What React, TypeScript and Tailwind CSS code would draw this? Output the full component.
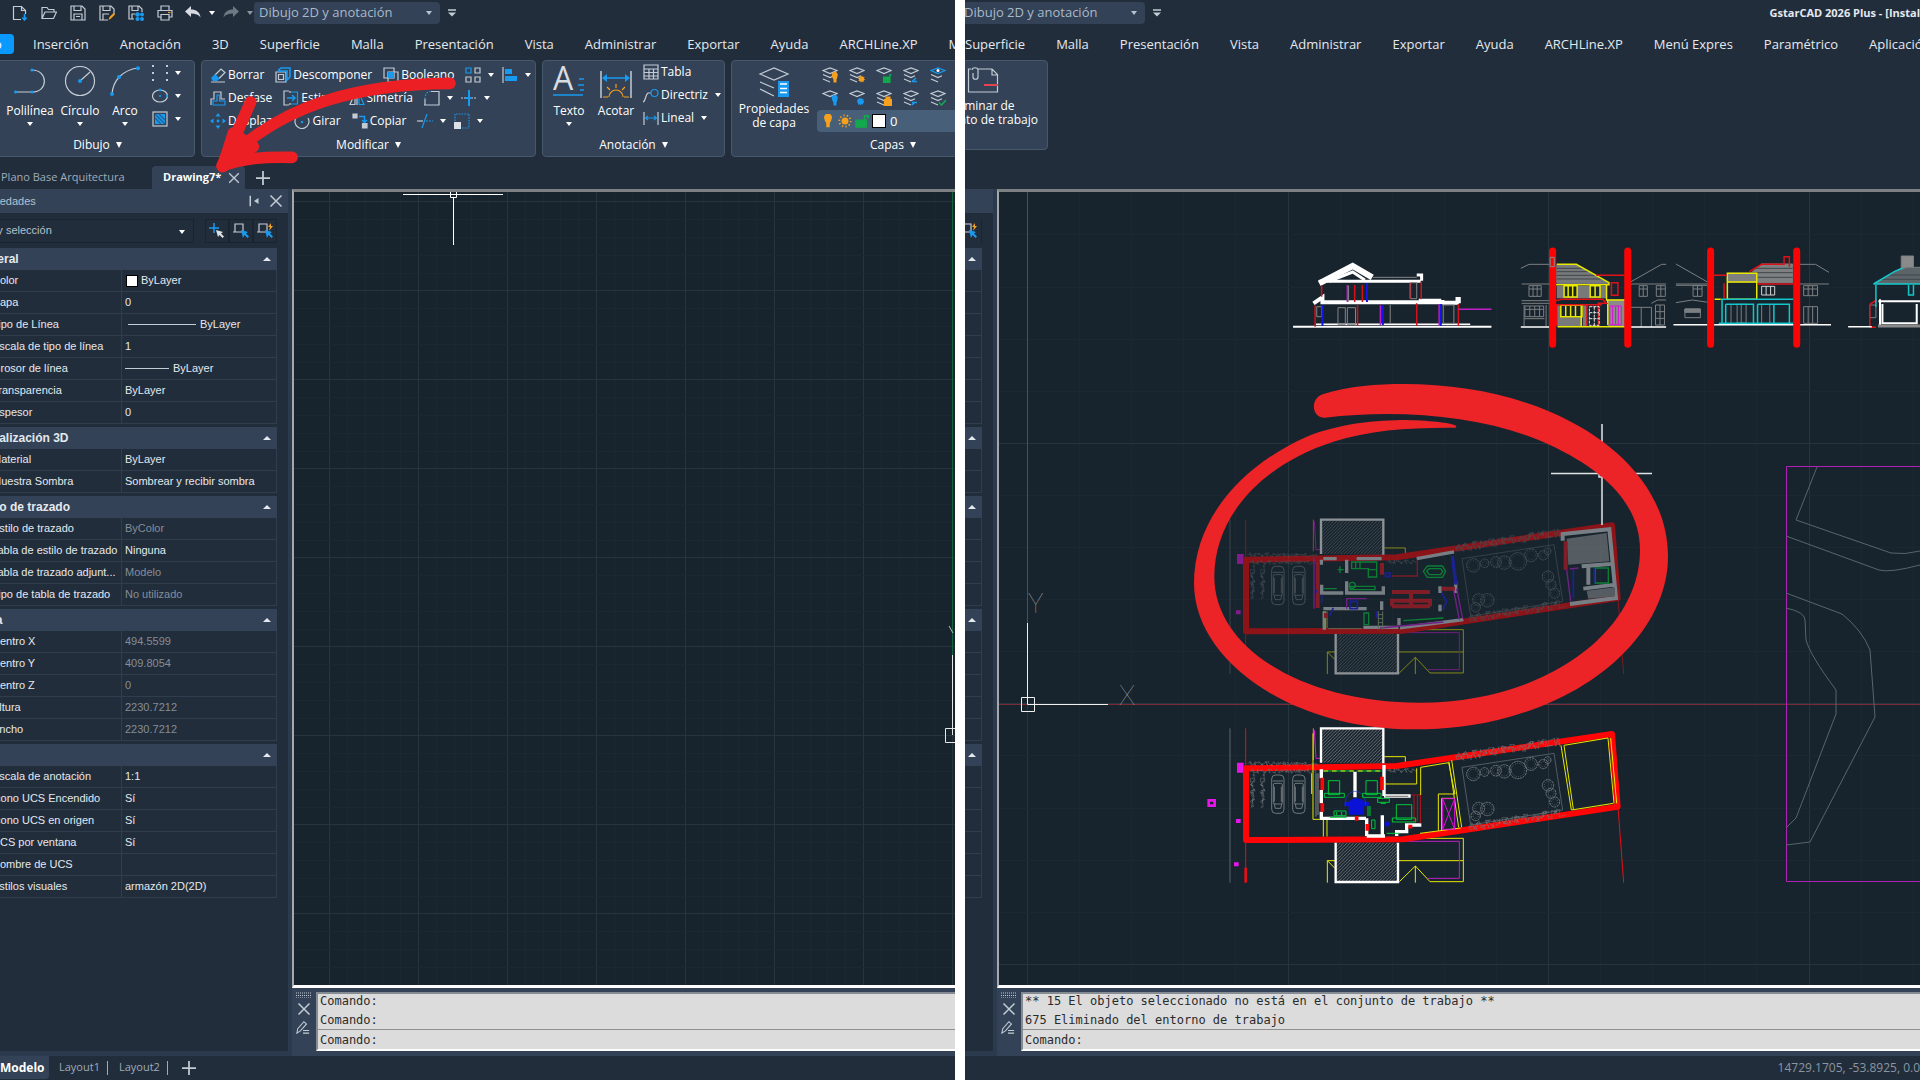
import {ReactNode} from "react";
import {clsx} from "clsx";

const BLUE = "#189af0";
const GRAY = "#c3ccd5";
const ORANGE = "#f5a01e";
const GREEN = "#12a84c";

interface IconProps {
    children: ReactNode;
    className?: string;
    box?: string;
}

const Icon = ({children, className = "size-4", box = "0 0 16 16"}: IconProps) => (
    <svg viewBox={box} className={clsx("shrink-0", className)} fill="none" stroke={GRAY} strokeWidth="1.2" aria-hidden="true">
        {children}
    </svg>
);

const Caret = ({className = "text-white"}: {className?: string}) => (
    <svg viewBox="0 0 6 4" className={clsx("w-[6px] h-1 shrink-0", className)} fill="currentColor" aria-hidden="true">
        <path d="M0 0h6L3 4z" />
    </svg>
);

const CrossIcon = ({className}: {className?: string}) => (
    <Icon className={className}>
        <path d="M2.500 2.500l11 11M13.500 2.500l-11 11" strokeWidth="1.500" />
    </Icon>
);

/* ---------- barra de título ---------- */

const quickIcons: {label: string; icon: ReactNode}[] = [
    {label: "Nuevo", icon: <Icon><path d="M9 14.500H1.500V1.500h8l4 4V9M9.500 1.500v4h4" /><path d="M12.500 9v6M10.300 12.500l2.200 2.500 2.200-2.500" stroke={BLUE} strokeWidth="1.600" /></Icon>},
    {label: "Abrir", icon: <Icon><path d="M1 13.500V2.500h5l1.500 2H13v2.500M1 13.500L4 7h11.500l-3 6.500z" /></Icon>},
    {label: "Guardar", icon: <Icon><path d="M1 1h11l3 3v11H1zM4 1v4.500h7V1M4 15V9h8v6M6 11.500h4" /></Icon>},
    {label: "Guardar como", icon: <Icon><path d="M9 15H1V1h11l3 3v5M4 1v4.500h7V1M4 15V9h6" /><path d="M9.500 15l1-3 4-4 1.500 1.500-4 4z" fill={ORANGE} stroke="none" /></Icon>},
    {label: "Guardar todo", icon: <Icon><path d="M6 14H1V1h10l3 3v3M4 1v4.500h6V1M4 14V9h3" /><g fill={BLUE} stroke="none"><circle cx="9.500" cy="9.500" r="2.300" /><circle cx="14" cy="9.500" r="2" /><circle cx="9.500" cy="14" r="2" /><circle cx="14" cy="14" r="2" /></g></Icon>},
    {label: "Imprimir", icon: <Icon><path d="M4 5.500V1h8v4.500M4 12H1V5.500h14V12h-3M4 9.500h8V15H4z" /><path d="M11 7.500h2.500" stroke={ORANGE} /></Icon>},
];

const QuickAccess = () => (
    <div className="flex items-center shrink-0">
        <div className="flex items-center gap-[13px] pl-3 pr-3">
            {quickIcons.map(item => (
                <button key={item.label} aria-label={item.label} className="block">{item.icon}</button>
            ))}
        </div>
        <div className="flex items-center gap-2 pr-px">
            <button aria-label="Deshacer">
                <Icon><path d="M6 1v3.500c5 0 9 2.500 9.500 8-2-3-5-4-9.500-4V12L0 6.500z" fill="#d5dbe1" stroke="none" /></Icon>
            </button>
            <Caret />
            <button aria-label="Rehacer">
                <Icon><path d="M10 1v3.500c-5 0-9 2.500-9.500 8 2-3 5-4 9.500-4V12l6-5.500z" fill="#6d7985" stroke="none" /></Icon>
            </button>
            <Caret className="text-[#8b96a1]" />
        </div>
    </div>
);

const WorkspaceBox = ({id, clipped}: {id: string; clipped?: boolean}) => (
    <div className="flex items-center gap-2 shrink-0">
        <div className={clsx("relative h-[22px] w-[186px] bg-[#334256] rounded-sm", clipped && "-ml-[6px]")}>
            <label htmlFor={id} className="sr-only">Espacio de trabajo</label>
            <select id={id} className="block appearance-none w-full h-full pl-[5px] pb-[2px] bg-transparent text-[13px] leading-5 text-[#a9b9ca] outline-none">
                <option>Dibujo 2D y anotación</option>
            </select>
            <div className="absolute right-2 top-[9px] pointer-events-none"><Caret className="text-[#b6c3d0]" /></div>
        </div>
        <button aria-label="Personalizar">
            <Icon className="w-2 h-2" box="0 0 8 8"><path d="M0 1h8" strokeWidth="1.500" /><path d="M0 3.500h8L4 7.500z" fill={GRAY} stroke="none" /></Icon>
        </button>
    </div>
);

const MenuTabs = ({tabs}: {tabs: string[]}) => (
    <nav className="flex items-center gap-[31px] text-[13px] leading-5 text-[#e4e9ee] whitespace-nowrap">
        {tabs.map(tab => <a key={tab} href="#">{tab}</a>)}
    </nav>
);

/* ---------- cinta ---------- */

const RibbonPanel = ({title, children, className}: {title?: string; children: ReactNode; className?: string}) => (
    <section className={clsx("flex flex-col shrink-0 bg-[#334256] border border-[#46586c] rounded text-white text-xs leading-4 whitespace-nowrap", className)}>
        <div className="flex-1 flex">{children}</div>
        {title && (
            <button className="h-[22px] flex items-center justify-center gap-[6px]">
                {title}
                <svg viewBox="0 0 6 6" className="size-[6px]" fill="white" aria-hidden="true"><path d="M0 0h6L3 6z" /></svg>
            </button>
        )}
    </section>
);

const BigTool = ({label, icon, caret, className}: {label: string; icon: ReactNode; caret?: boolean; className?: string}) => (
    <button className={clsx("flex flex-col items-center justify-start pt-[5px]", className)}>
        {icon}
        <span className="mt-1 mb-[2px] leading-[18px]">{label}</span>
        {caret && <Caret />}
    </button>
);

const SmallTool = ({label, icon, caret, name}: {label?: string; icon: ReactNode; caret?: boolean; name?: string}) => (
    <button aria-label={label ?? name} className="flex items-center gap-[2px]">
        {icon}
        {label}
        {caret && <span className="pl-[5px]"><Caret /></span>}
    </button>
);

const Dot = ({x, y, r = 1.6}: {x: number; y: number; r?: number}) => <circle cx={x} cy={y} r={r} fill={BLUE} stroke="none" />;

const PolylineIcon = () => (
    <Icon className="size-8" box="0 0 32 32">
        <path d="M1 26h17M18 4c16 0 17 22 0 22" /><Dot x={1.600} y={26} /><Dot x={18} y={26} /><Dot x={18} y={4} />
    </Icon>
);
const CircleIcon = () => (
    <Icon className="size-8" box="0 0 32 32">
        <circle cx="16" cy="15" r="14.500" /><path d="M16 15l10-9" /><Dot x={16} y={15} r={2} />
    </Icon>
);
const ArcIcon = () => (
    <Icon className="size-8" box="0 0 32 32">
        <path d="M3 28C4 14 14 4 29 2" /><Dot x={3} y={28} r={2} /><Dot x={10} y={11} r={2} /><Dot x={29} y={2.200} r={2} />
    </Icon>
);

const PointsIcon = () => (
    <Icon>
        <g fill={GRAY} stroke="none">
            {[0, 7, 14].flatMap(y => [0, 14].map(x => <rect key={`${x}-${y}`} x={x} y={y} width="2" height="2" />))}
        </g>
    </Icon>
);
const EllipseIcon = () => (
    <Icon><ellipse cx="8" cy="8" rx="7.500" ry="6" /><Dot x={8} y={8} r={1.100} /><Dot x={8} y={2} r={1.400} /><Dot x={15} y={8} r={1.200} /></Icon>
);
const HatchIcon = () => (
    <Icon><rect x="1" y="1" width="14" height="14" /><rect x="3" y="3" width="10" height="10" fill={BLUE} stroke="none" /><path d="M3 7l6 6M3 3l10 10M7 3l6 6" stroke="#22608f" /></Icon>
);

const EraseIcon = () => (
    <Icon><path d="M1 15h14M5 8l6-6 4 3.500-6 6" /><path d="M1 11l4-4 4.500 4.500L7 14H3z" fill={BLUE} stroke="none" /></Icon>
);
const ExplodeIcon = () => (
    <Icon><path d="M1 5h10v10H1zM3.500 7.500h5v5h-5z" /><path d="M3 3.500L6 1h9v9l-3 3V4H3" stroke={BLUE} strokeWidth="1.600" /></Icon>
);
const BooleanIcon = () => (
    <Icon><path d="M1 1h10v10H1zM5 5h10v10H5z" /><path d="M5 5h6v6H5z" fill={BLUE} stroke="none" /></Icon>
);
const OffsetIcon = () => (
    <Icon><path d="M1 15V9h3V2h7v7h4" /><path d="M3 15v-4h4V5h2.500v6H15v4z" stroke={BLUE} /></Icon>
);
const StretchIcon = () => (
    <Icon><path d="M6 1H1v14h5M7 3V1M7 15v-2" /><path d="M4 8h8M9 5l3 3-3 3" stroke={BLUE} strokeWidth="1.500" /><path d="M8 2h6.500v12H8" stroke={BLUE} /></Icon>
);
const MirrorIcon = () => (
    <Icon><path d="M6 3v11.500H1zM8 1v14" /><path d="M10 3v11.500h5z" stroke={BLUE} /></Icon>
);
const MoveIcon = () => (
    <Icon>
        <g fill={BLUE} stroke="none"><circle cx="8" cy="8" r="1.400" /><path d="M8 0l2.500 3.500h-5zM8 16l2.500-3.500h-5zM0 8l3.500-2.500v5zM16 8l-3.500-2.500v5z" /></g>
    </Icon>
);
const RotateIcon = () => (
    <Icon><path d="M14 5a7 7 0 1 1-6-3.500" /><path d="M5.500 0v4L9 2z" fill={BLUE} stroke="none" /><Dot x={8} y={9} r={1.200} /></Icon>
);
const CopyIcon = () => (
    <Icon><path d="M1 1h4v4H1zM10.500 10.500h4.500V15h-4.500z" fill={GRAY} /><path d="M7 3.500h5.500V9M10 7l2.500 2.500L15 7" stroke={BLUE} strokeWidth="1.500" /></Icon>
);
const ArrayIcon = () => (
    <Icon><path d="M1 1h5v5H1z" stroke={BLUE} /><path d="M10 1h5v5h-5zM1 10h5v5H1zM10 10h5v5h-5z" /></Icon>
);
const AlignIcon = () => (
    <Icon><path d="M1 0v16" /><path d="M3 2h7v5H3zM3 9h12v5H3z" fill={BLUE} stroke="none" /></Icon>
);
const FilletIcon = () => (
    <Icon><path d="M7 1.500h8V15H0M1 9v6" /><path d="M1 9c0-5 2-7.500 6-7.500" strokeDasharray="1.500 1.500" stroke={BLUE} /></Icon>
);
const BreakIcon = () => (
    <Icon><path d="M8 0v16" stroke={BLUE} strokeWidth="2" /><path d="M0 8h6M10 8h6" strokeDasharray="2 1" /><path d="M5 8h6" stroke={BLUE} strokeWidth="2" /></Icon>
);
const TrimIcon = () => (
    <Icon><path d="M5 15L10 1" stroke={BLUE} /><path d="M0 8h6" /><path d="M9 8h7" stroke={BLUE} strokeDasharray="2 1" /></Icon>
);
const ScaleIcon = () => (
    <Icon><path d="M1 8V1h14v14H8" stroke={BLUE} strokeDasharray="1.500 1.200" /><path d="M0 9h7v7H0z" fill="#dde2e6" stroke="none" /></Icon>
);

const DrawPanel = () => (
    <RibbonPanel title="Dibujo" className="w-[196px] -ml-px rounded-l-none pl-px">
        <BigTool label="Polilínea" caret icon={<PolylineIcon />} className="w-[58px]" />
        <BigTool label="Círculo" caret icon={<CircleIcon />} className="w-[42px]" />
        <BigTool label="Arco" caret icon={<ArcIcon />} className="w-12" />
        <div className="flex flex-col gap-[7px] pt-1 pl-[3px]">
            <SmallTool name="Puntos" caret icon={<PointsIcon />} />
            <SmallTool name="Elipse" caret icon={<EllipseIcon />} />
            <SmallTool name="Sombreado" caret icon={<HatchIcon />} />
        </div>
    </RibbonPanel>
);

const ModifyPanel = () => (
    <RibbonPanel title="Modificar" className="w-[335px]">
        <div className="flex flex-col gap-[7px] pt-[6px] pl-2">
            <div className="flex gap-[11px]">
                <SmallTool label="Borrar" icon={<EraseIcon />} />
                <SmallTool label="Descomponer" icon={<ExplodeIcon />} />
                <SmallTool label="Booleano" icon={<BooleanIcon />} />
                <div className="flex gap-2">
                    <SmallTool name="Matriz" caret icon={<ArrayIcon />} />
                    <SmallTool name="Alinear" caret icon={<AlignIcon />} />
                </div>
            </div>
            <div className="flex gap-[11px]">
                <SmallTool label="Desfase" icon={<OffsetIcon />} />
                <SmallTool label="Estirar" icon={<StretchIcon />} />
                <SmallTool label="Simetría" icon={<MirrorIcon />} />
                <div className="flex gap-2">
                    <SmallTool name="Empalme" caret icon={<FilletIcon />} />
                    <SmallTool name="Partir" caret icon={<BreakIcon />} />
                </div>
            </div>
            <div className="flex gap-[11px]">
                <SmallTool label="Desplazar" icon={<MoveIcon />} />
                <SmallTool label="Girar" icon={<RotateIcon />} />
                <SmallTool label="Copiar" icon={<CopyIcon />} />
                <div className="flex gap-2">
                    <SmallTool name="Recortar" caret icon={<TrimIcon />} />
                    <SmallTool name="Escala" caret icon={<ScaleIcon />} />
                </div>
            </div>
        </div>
    </RibbonPanel>
);

const AnnotationPanel = () => (
    <RibbonPanel title="Anotación" className="w-[183px]">
        <BigTool
            label="Texto"
            caret
            className="w-[52px]"
            icon={
                <Icon className="size-8" box="0 0 32 32">
                    <path d="M0 29h30M26 13h5M25 19h6M27 24h4" stroke={BLUE} strokeWidth="1.500" />
                    <text x="0" y="24" fontSize="32" fontFamily="Open Sans, sans-serif" fill="#d8dde2" stroke="none">A</text>
                </Icon>
            }
        />
        <BigTool
            label="Acotar"
            className="w-[42px]"
            icon={
                <Icon className="size-8" box="0 0 32 32">
                    <path d="M1 5v27M31 5v27" strokeWidth="1.500" />
                    <path d="M3 12h26" stroke={BLUE} strokeWidth="1.500" />
                    <path d="M2 12l5-4v8zM30 12l-5-4v8z" fill={BLUE} stroke="none" />
                    <path d="M9 31a7 7 0 0 1 14 0M3 31h5M24 31h5M16 22v-4M10 24l-3-3M22 24l3-3" stroke={ORANGE} />
                </Icon>
            }
        />
        <div className="flex flex-col gap-[7px] pt-[3px] pl-[6px]">
            <SmallTool label="Tabla" icon={<Icon><path d="M1 1h14v14H1zM1 5h14M1 8.500h14M1 12h14M6 5v10M10.500 5v10" /></Icon>} />
            <SmallTool label="Directriz" caret icon={<Icon><path d="M0 15c3-1 2-7 5-9h3" /><circle cx="11.500" cy="6" r="3.500" stroke={BLUE} /></Icon>} />
            <SmallTool label="Lineal" caret icon={<Icon><path d="M1 2v13M15 2v13" /><path d="M2.500 8h11M5 6L2.500 8 5 10M11 6l2.500 2-2.500 2" stroke={BLUE} /></Icon>} />
        </div>
    </RibbonPanel>
);

const sun = <circle cx="12.500" cy="12" r="2.600" fill={ORANGE} stroke={ORANGE} strokeDasharray="1 1" strokeWidth="1.500" />;
const layerTools: {name: string; top?: string; short?: boolean; mark: ReactNode}[] = [
    {name: "Desactivar capa", mark: <path d="M10 9a3 3 0 1 1 5.500 0c0 2-1 2.500-1 4v2.500h-3V13c0-1.500-1.500-2-1.500-4z" fill={ORANGE} stroke="none" />},
    {name: "Inutilizar capa", mark: sun},
    {name: "Desbloquear capa", short: true, mark: <path d="M7.500 10h6.500v6H7.500zM14 10V7.500h1.500" fill={GREEN} stroke={GREEN} />},
    {name: "Capa actual", mark: <path d="M9 14.500h5M13 11l-4 3.500" stroke={BLUE} strokeWidth="1.600" />},
    {name: "Aislar capa", top: BLUE, mark: <circle cx="8" cy="3.500" r="1.500" fill="#fff" stroke="none" />},
    {name: "Activar capas", short: true, mark: <path d="M10 9a3 3 0 1 1 5.500 0c0 2-1 2.500-1 4v2.500h-3V13c0-1.500-1.500-2-1.500-4z" fill={BLUE} stroke="none" />},
    {name: "Reutilizar capas", short: true, mark: <circle cx="11.500" cy="11.500" r="3" fill={BLUE} stroke={BLUE} strokeDasharray="1 1" />},
    {name: "Bloquear capa", mark: <path d="M8.500 9.500h7v6h-7zM10 9V7h4v2" fill={ORANGE} stroke={ORANGE} />},
    {name: "Cambiar capa", mark: <path d="M9 12.500h5M9 15l3-3" stroke={BLUE} strokeWidth="1.600" />},
    {name: "Igualar capa", mark: <path d="M9 12.500l2.500 2.500L16 10" stroke={GREEN} strokeWidth="1.600" />},
];

const LayersPanel = () => (
    <RibbonPanel title="Capas" className="w-[324px]">
        <button className="flex flex-col items-center justify-start w-[84px] pt-[6px]">
            <Icon className="size-8" box="0 0 32 32">
                <path d="M2 7l14-6 14 6-14 6zM2 15l14 6M2 22l14 7" />
                <path d="M20 14h11v16H20z" fill={BLUE} stroke="none" />
                <path d="M22 17h7M22 21.500h7M22 25.500h7" stroke="#fff" strokeWidth="1.500" />
            </Icon>
            <span className="mt-[3px] text-xs leading-[14px]">Propiedades<br />de capa</span>
        </button>
        <div className="flex-1 flex flex-col pt-[6px]">
            <div className="grid grid-cols-[repeat(5,27px)] gap-y-[7px] pl-[6px]">
                {layerTools.map(tool => (
                    <button key={tool.name} aria-label={tool.name}>
                        <Icon>
                            <path d="M1 3.500L8 1l7 2.500L8 6.500z" stroke={tool.top ?? GRAY} />
                            {!tool.short && <path d="M1 7.500l7 3 4-1.800M1 12l7 3" />}
                            {tool.mark}
                        </Icon>
                    </button>
                ))}
            </div>
            <button className="mt-1 h-[22px] w-[220px] flex items-center gap-[3px] pl-1 ml-px rounded bg-[#475f79] text-[13px]">
                <Icon className="size-[14px]"><path d="M4 6a4.500 4.500 0 1 1 8 0c0 2-2 3-2 5v4H6v-4c0-2-2-3-2-5z" fill={ORANGE} stroke="none" /></Icon>
                <Icon className="size-[14px]"><circle cx="8" cy="8" r="4" fill={ORANGE} stroke="none" /><circle cx="8" cy="8" r="6.500" stroke={ORANGE} strokeDasharray="1.500 2.500" strokeWidth="2" /></Icon>
                <Icon className="size-[14px]"><path d="M1 7h12v8H1z" fill={GREEN} stroke={GREEN} /><path d="M11 7V2h4v3" stroke={GREEN} strokeWidth="2" /></Icon>
                <span className="size-[14px] bg-white border border-black" />
                <span className="pl-px">0</span>
            </button>
        </div>
    </RibbonPanel>
);

const DocumentTabs = () => (
    <div className="h-8 pt-[9px] flex items-stretch text-[11px] text-[#9fabb8] whitespace-nowrap">
        <button className="w-[152px] text-left pl-px">Plano Base Arquitectura</button>
        <div className="flex items-center justify-between w-[93px] pl-[11px] pr-1 rounded-t bg-[#334256]">
            <button className="font-bold text-white">Drawing7*</button>
            <button aria-label="Cerrar dibujo"><CrossIcon className="size-[14px]" /></button>
        </div>
        <button aria-label="Nuevo dibujo" className="pl-[11px] flex items-center">
            <Icon className="size-[14px]"><path d="M8 0v16M0 8h16" strokeWidth="2" /></Icon>
        </button>
    </div>
);

/* ---------- propiedades ---------- */

interface PropertyRow {
    label: string;
    value: ReactNode;
    muted?: boolean;
}

interface PropertySection {
    id: string;
    title: string;
    rows: PropertyRow[];
}

const sections: PropertySection[] = [
    {
        id: "general",
        title: "General",
        rows: [
            {label: "Color", value: <span className="flex items-center gap-[3px]"><span className="size-3 bg-white border border-black ml-px" />ByLayer</span>},
            {label: "Capa", value: "0"},
            {label: "Tipo de Línea", value: <span className="flex items-center gap-1"><span className="w-[68px] h-px bg-[#c3ccd5] ml-[3px]" />ByLayer</span>},
            {label: "Escala de tipo de línea", value: "1"},
            {label: "Grosor de línea", value: <span className="flex items-center gap-1"><span className="w-11 h-px bg-[#c3ccd5]" />ByLayer</span>},
            {label: "Transparencia", value: "ByLayer"},
            {label: "Espesor", value: "0"},
        ],
    },
    {
        id: "3d",
        title: "Visualización 3D",
        rows: [
            {label: "Material", value: "ByLayer"},
            {label: "Muestra Sombra", value: "Sombrear y recibir sombra"},
        ],
    },
    {
        id: "plot",
        title: "Estilo de trazado",
        rows: [
            {label: "Estilo de trazado", value: "ByColor", muted: true},
            {label: "Tabla de estilo de trazado", value: "Ninguna"},
            {label: "Tabla de trazado adjunt...", value: "Modelo", muted: true},
            {label: "Tipo de tabla de trazado", value: "No utilizado", muted: true},
        ],
    },
    {
        id: "view",
        title: "Vista",
        rows: [
            {label: "Centro X", value: "494.5599", muted: true},
            {label: "Centro Y", value: "409.8054", muted: true},
            {label: "Centro Z", value: "0", muted: true},
            {label: "Altura", value: "2230.7212", muted: true},
            {label: "Ancho", value: "2230.7212", muted: true},
        ],
    },
    {
        id: "misc",
        title: "",
        rows: [
            {label: "Escala de anotación", value: "1:1"},
            {label: "Icono UCS Encendido", value: "Sí"},
            {label: "Icono UCS en origen", value: "Sí"},
            {label: "UCS por ventana", value: "Sí"},
            {label: "Nombre de UCS", value: ""},
            {label: "Estilos visuales", value: "armazón 2D(2D)"},
        ],
    },
];

const Collapse = () => (
    <svg viewBox="0 0 8 4" className="w-2 h-1" fill="#e4e9ee" aria-hidden="true"><path d="M0 4h8L4 0z" /></svg>
);

const PickAdd = () => (
    <Icon><path d="M5 0v10M0 5h10" stroke={BLUE} strokeWidth="1.500" /><path d="M7 7l7 2-2 1.500 3 3-1.500 1.500-3-3L9 14z" fill="#dde2e6" stroke="none" /></Icon>
);
const PickObject = ({quick}: {quick?: boolean}) => (
    <Icon>
        <path d="M2 1h8v8H2zM0 9h3" />
        <path d="M8 7l7 2-2 1.500 3 3-1.500 1.500-3-3-1.500 3z" fill={BLUE} stroke="none" />
        {quick && <path d="M14 0l-3 4h2l-1 4 4-5h-2z" fill={ORANGE} stroke="none" />}
    </Icon>
);

const PropertiesPanel = () => (
    <aside className="w-[292px] shrink-0 flex bg-[#2c3a4d] overflow-hidden">
        <div className="w-[288px] mb-[5px] flex flex-col bg-[#222d3b] text-[11px] font-['Liberation_Sans',Arial,sans-serif] text-[#e4e9ee] whitespace-nowrap">
            <div className="h-6 flex items-center justify-between pr-1 bg-[#334256] text-[#b6c1cc]">
                <span className="-ml-[26px]">Propiedades</span>
                <span className="flex items-center gap-2">
                    <button aria-label="Ocultar"><Icon className="size-3"><path d="M3 1v14" strokeWidth="2" /><path d="M14 4v8L8 8z" fill={GRAY} stroke="none" /></Icon></button>
                    <button aria-label="Cerrar"><CrossIcon className="size-4" /></button>
                </span>
            </div>
            <div className="flex pt-[6px] pb-[5px] justify-between pr-[11px]">
                <div className="relative w-[194px] h-6 border border-l-0 border-[#1a232e] overflow-hidden">
                    <label htmlFor="selection" className="sr-only">Selección</label>
                    <select id="selection" className="block appearance-none w-[226px] h-[22px] -ml-8 pb-[2px] bg-transparent text-[#b6c1cc] outline-none">
                        <option>No hay selección</option>
                    </select>
                    <span className="absolute right-2 top-[10px] pointer-events-none"><Caret /></span>
                </div>
                <div className="flex">
                    <button aria-label="Añadir a la selección" className="size-6 flex items-center justify-center border border-[#1a232e]"><PickAdd /></button>
                    <button aria-label="Seleccionar objetos" className="size-6 flex items-center justify-center border border-[#1a232e]"><PickObject /></button>
                    <button aria-label="Selección rápida" className="size-6 flex items-center justify-center border border-[#1a232e]"><PickObject quick /></button>
                </div>
            </div>
            <div className="flex flex-col gap-[3px] w-[301px] -ml-6">
                {sections.map(section => (
                    <div key={section.id}>
                        <button aria-label={section.title || "Varios"} className="w-full h-[22px] pr-[6px] flex items-center justify-between bg-[#334256] text-xs font-bold">
                            <span className="-ml-[2px]">{section.title}</span>
                            <Collapse />
                        </button>
                        <table className="w-full table-fixed border-separate border-spacing-0">
                            <tbody>
                                {section.rows.map(row => (
                                    <tr key={row.label} className="h-[22px]">
                                        <th scope="row" className="w-[146px] p-0 pl-4 font-normal text-left border-r border-b border-[#2f3d4f]">{row.label}</th>
                                        <td className={clsx("p-0 pl-[3px] border-r border-b border-[#2f3d4f]", row.muted && "text-[#838e99]")}>{row.value}</td>
                                    </tr>
                                ))}
                            </tbody>
                        </table>
                    </div>
                ))}
            </div>
        </div>
    </aside>
);

/* Borde derecho de la paleta cuando la ventana queda recortada */
const PropertiesEdge = () => (
    <aside className="w-8 shrink-0 flex bg-[#2c3a4d]">
        <div className="w-7 mb-[5px] bg-[#222d3b]">
            <div className="h-6 bg-[#334256]" />
            <div className="h-[35px] pt-[6px] overflow-hidden">
                <button aria-label="Selección rápida" className="w-[17px] h-6 flex items-center justify-end pr-1 border-r border-[#1a232e]"><PickObject quick /></button>
            </div>
            <div className="w-[17px] flex flex-col gap-[3px]">
                {sections.map(section => (
                    <div key={section.id}>
                        <div className="h-[22px] bg-[#334256] flex items-center pl-[3px]"><Collapse /></div>
                        {section.rows.map(row => <div key={row.label} className="h-[22px] border-b border-r border-[#2f3d4f]" />)}
                    </div>
                ))}
            </div>
        </div>
    </aside>
);

/* ---------- área de dibujo ---------- */

interface GridProps {
    x: number;
    y: number;
    step: number;
    major: number;
    left: number;
    width: number;
}

const Grid = ({x, y, step, major, left, width}: GridProps) => {
    const xs = Array.from({length: Math.ceil(width / step) + 1}, (_, i) => i);
    const ys = Array.from({length: Math.ceil(800 / step) + 1}, (_, i) => i);
    return (
        <g strokeWidth="1" shapeRendering="crispEdges">
            {xs.map(i => <path key={`x${i}`} d={`M${x + i * step} 190V990`} stroke={i % major === 0 ? "#26343e" : "#1b2831"} />)}
            {ys.map(i => <path key={`y${i}`} d={`M${left} ${y + i * step}H${left + width}`} stroke={i % major === 0 ? "#26343e" : "#1b2831"} />)}
        </g>
    );
};

const EmptyDrawing = () => (
    <svg className="block w-full h-full" fill="none" aria-label="Dibujo vacío">
        <g transform="translate(-294 -192)">
            <Grid x={329.5} y={201.8} step={17.8} major={5} left={294} width={2000} />
            <path d="M952.500 192v463" stroke="#14613a" />
            <path d="M949 626l4 7" stroke="#b9bec2" />
            <path d="M952.500 655v80M945.500 728.500h14v14h-14z" stroke="#e6e6e6" />
            <path d="M403 194.500h100M453.500 197v48M450.500 191.500h6v6h-6z" stroke="#fff" />
        </g>
    </svg>
);

// contorno irregular de los setos
const hedge = (x1: number, y1: number, x2: number, y2: number, size: number) => {
    const n = Math.round(Math.hypot(x2 - x1, y2 - y1) / 2.5);
    return Array.from({length: n + 1}, (_, i) => {
        const t = i / n;
        const dx = Math.sin(i * i * 1.7) * size * 0.7;
        const dy = Math.sin(i * i * 2.3 + i) * size;
        return `${i ? "L" : "M"}${(x1 + (x2 - x1) * t + dx).toFixed(1)} ${(y1 + (y2 - y1) * t + dy).toFixed(1)}`;
    }).join("");
};

const trees = [
    [850, 192, 20], [884, 186, 13], [918, 182, 16], [943, 184, 20], [984, 180, 26], [1023, 162, 19], [1060, 162, 14], [1073, 150, 10],
    [1074, 226, 17], [1083, 250, 15], [1094, 276, 15], [892, 297, 20], [866, 295, 18], [857, 318, 14],
];

const Car = ({x}: {x: number}) => (
    <g>
        <rect x={x} y="195" width="37" height="115" rx="12" />
        <rect x={x + 5} y="220" width="27" height="62" rx="5" />
        <path d={`M${x + 3} 213h31M${x + 7} 280l4 15h16l4-15M${x + 8} 230v45M${x + 29} 230v45`} />
    </g>
);

const SiteBase = () => (
    <g strokeWidth="3">
        <path d="M120 55V518" stroke="#5b646b" />
        <path d="M370 55V150" stroke="#e07a5c" />
        <path d="M373 60l5 85h12" stroke="#d01fd0" />
        <path d="M167 55V518" stroke="#e01018" />
        <path d="M167 473V518" stroke="#e01018" strokeWidth="8" />
        <path d="M1284 290L1301 518" stroke="#e01018" />
        <g fill="#e815e8" stroke="none">
            <path d="M141 158h20v30h-20zM138 327h14v12h-14zM132 457h14v12h-14z" />
        </g>
        <g stroke="#70777c">
            <Car x={245} />
            <Car x={308} />
            <path d="M816 172L1092 130L1118 300L842 345Z" strokeWidth="2" />
            {trees.map(([x, y, r]) => (
                <g key={`${x}-${y}`}>
                    <circle cx={x} cy={y} r={r} strokeDasharray="7 2" />
                    <circle cx={x} cy={y} r={r - 6} strokeDasharray="3 4" strokeWidth="2" />
                </g>
            ))}
            <g strokeWidth="1.5">
                <path d={hedge(188, 195, 188, 290, 9)} />
                <path d={hedge(218, 195, 218, 288, 9)} />
            </g>
        </g>
        <g stroke="#e8e800">
            <path d="M583 140h63v30M820 385V515H720L676 468L628 515M676 468V518M625 452H820M412 518V452H437M412 452l22 22M400 330v50M411 330v50M640 385H820" />
        </g>
        <path d="M630 394H808V505H712" stroke="#c01fc8" />
    </g>
);

const Boundary = () => (
    <g>
        <path d="M168 175L620 168L1266 72L1283 290L640 388L168 390Z" stroke="#ff0505" strokeWidth="18" strokeLinejoin="round" />
        <g stroke="#74787b" strokeWidth="1.5">
            <path d={hedge(172, 160, 380, 163, 6)} />
            <path d={hedge(180, 184, 380, 184, 6)} />
            <path d={hedge(795, 142, 1104, 95, 13)} />
            <path d={hedge(835, 352, 1120, 308, 13)} />
            <path d={hedge(590, 182, 680, 182, 6)} />
        </g>
    </g>
);

const Roofs = () => (
    <g fill="url(#hatch)" stroke="#fff" strokeWidth="7">
        <path d="M393 158V55H580V160" />
        <path d="M437 398V516H624V398" />
    </g>
);

const UpperFloor = () => (
    <g>
        <g stroke="#fff" strokeWidth="10">
            <path d="M394 178V205M394 240V280M394 305V326M390 325H528M495 185V262M582 165V258M582 258H662M530 325V378M530 378H585M577 316V380M620 378V365H650V345H694" />
        </g>
        <path d="M586 259H655" stroke="#8a8a8a" strokeWidth="4" />
        <path d="M397 203V240M397 280V305M576 200V240M500 318V332M532 342V362M655 350h12" stroke="#ff0505" strokeWidth="11" />
        <path d="M665 255H691V340M672 258V335M682 258V335" stroke="#c01018" strokeWidth="3" />
        <path d="M478 275c6-14 36-14 44 0l14 0v14h-14v25h-46v-25l-12-2v-12zM584 335h14v14h-14z" fill="#0a12d8" />
        <path d="M465 290c0-30 12-45 28-46 20 0 32 14 34 40" stroke="#2a3ad8" strokeWidth="2" />
        <g stroke="#00c83c" strokeWidth="3">
            <path d="M415 212h34v42h-34zM403 250h60v12h-60zM528 212h34v42h-34zM518 250h55v12h-55zM619 284h46v44h-46zM607 324h70v12h-70zM432 303h36v14h-36zM440 306v10M455 306v10M534 288v30M540 288v30M545 330h10v26h-10zM563 265h35v12h-35zM572 280h16M400 183h90M500 183h75M590 370h40M420 322h50" />
        </g>
        <path d="M400 183H575" stroke="#e8e800" strokeWidth="3" strokeDasharray="14 12" />
        <g stroke="#e8e800" strokeWidth="3">
            <path d="M369 70V328H390M365 190v62M583 222H680V175M692 255V172L776 158L795 252H745V362M755 360V265H793M785 150L815 352M777 155L806 352M690 370L812 354" />
            <path d="M1122 106L1254 84M1113 106L1144 300M1122 106L1150 298M1145 300L1270 280M1254 84L1272 280M1262 84L1280 280" />
        </g>
        <path d="M378 190V320M384 190V315" stroke="#8b8f92" strokeWidth="3" />
        <path d="M758 266h36v92h-36zM758 266l36 92M794 266l-36 92" stroke="#e010e0" strokeWidth="3" />
        <path d="M56 271h18v16H56z" stroke="#e815e8" strokeWidth="8" />
    </g>
);

const GroundFloor = () => (
    <g>
        <g stroke="#d5d9dd" strokeWidth="10">
            <path d="M394 175V190M400 172H440M500 172H575M470 175V215M395 250v25H460M470 240v35H585M580 255v20M400 322H530M575 300v26M403 330V385M520 378H625M627 350V372M750 255V275M750 310V330M797 240V275M680 172L792 152M630 380L820 355" />
            <path d="M1118 118V98L1258 84L1278 290L1140 308M1175 195L1262 188M1180 262L1275 250M1195 195V250" strokeWidth="12" />
        </g>
        <path d="M1130 112L1250 95L1258 180L1135 190ZM1190 268L1275 258V285L1195 292Z" fill="#93979a" />
        <path d="M383 180V320M576 185v35M606 272H720M606 315V298H660M720 315V298H665M606 315H720M663 270V315M755 262H795M408 335v15M1127 120V205" stroke="#e81820" strokeWidth="12" />
        <path d="M607 224H682V175" stroke="#d81820" strokeWidth="4" />
        <g stroke="#00d840" strokeWidth="4">
            <path d="M485 182h75v45h-25v-25h-50zM497 182v20M510 182v20M535 205h25M700 210l12-16h45l10 16-10 18h-45zM710 210l8-8h34l6 8-6 10h-34zM443 205h18M450 195v20M400 262H440M480 255h75v10h-75zM522 335h14v35h-14zM640 358L760 350M1215 200h40v45h-40z" />
            <circle cx="487" cy="252" r="9" />
        </g>
        <path d="M787 165L798 250" stroke="#1a20f8" strokeWidth="10" />
        <path d="M480 300h22v22h-22zM586 215h14v10h-14zM395 280v25M378 265v10M560 330v20M755 275l15 25-12 25M430 320l-12 25M1150 205v85M1212 200v45" stroke="#1a20f8" strokeWidth="5" />
        <path d="M372 170V322M470 322V292H530M790 262L808 355M800 262L818 352M1130 205L1142 300M1140 203L1165 200M570 380L760 362" stroke="#c81fe0" strokeWidth="4" />
        <path d="M415 382H515M565 330v55M578 330v55M565 340h13M565 352h13M565 364h13" stroke="#a0b080" strokeWidth="3" />
    </g>
);

// alzados y sección de la fila superior
const Elevations = () => (
    <g transform="translate(1280 240) scale(0.40816 0.33333)" className="[&_*]:[vector-effect:non-scaling-stroke]">
        <g stroke="#fff">
            <path d="M32 260H518" strokeWidth="2" />
            <path d="M88 253H466" strokeWidth="1.5" />
            <path d="M96 130L178 78L226 112" strokeWidth="6" />
            <path d="M96 124H345" strokeWidth="3" />
            <path d="M335 105H347V122M120 124L178 96L208 120" strokeWidth="3" />
            <path d="M82 190L104 172V187H398V180M430 177H438V190M340 182H395M398 188H438" strokeWidth="4" />
        </g>
        <path d="M228 112H335M400 195h26v55h-26zM142 203h18v50h-18zM165 203h20v50h-20zM270 195v55M320 128h15v48h-15zM168 137v48M90 200h12v30h-12z" stroke="#858585" />
        <path d="M102 136V170M86 196V260M183 135V186M202 135V186M190 196V258M335 190V258M346 125V178M437 192V258M318 128V176" stroke="#d81018" strokeWidth="1.5" />
        <path d="M165 135V186M390 192V258M437 208H518M246 196V255" stroke="#c01fc8" strokeWidth="1.5" />
        <path d="M213 130V186M104 196V258M252 196V255M394 192V258" stroke="#1216e8" strokeWidth="2" />

        <g stroke="#7b7f82">
            <path d="M590 85L610 73H670M592 132H670M592 182H670M592 190H670M850 132L935 73H946M855 132H946M598 195v65M652 195v65M610 137h30v32h-30zM620 137v32M630 137v32M610 147h30M600 198h46v32h-46zM600 208h46M612 198v32M624 198v32M636 198v32M598 236h50M880 137h20v32h-20zM890 137v32M880 147h20M922 137h22v32h-22zM933 137v32M922 147h22M910 190L925 180H946M860 202h50v60M885 202v60M920 195h22v60h-22zM931 195v60M920 215h22M920 235h22" />
            <path d="M678 75H726L806 130H678Z" fill="#77797b" />
            <path d="M678 138H800V175H678ZM678 196H690V258H678ZM742 196H752V258H742ZM688 232H740V258H688Z" fill="#77797b" stroke="none" />
            <path d="M804 180h48v78h-48z" fill="#8a8a8a" />
            <path d="M970 72L1050 128M970 132H1055M970 136H1050M970 188L1010 180L1055 188M1012 137h22v32h-22zM1023 137v32M1012 147h22M992 207h38v26h-38zM1265 73H1312L1345 97M1265 132H1345M1283 137h34v30h-34zM1283 147h34M1294 137v30M1305 137v30M1283 200h34v50h-34zM1294 200v50M1305 200v50" />
            <path d="M992 207h38v10h-38z" fill="#7b7f82" />
            <path d="M1180 72H1256V128H1170V98H1155ZM1096 100h72v26h-72z" fill="#7d7f81" />
            <path d="M1120 193h22v56h-22zM1130 193v56M1105 195v55M1180 195v55M1200 195v55" />
            <path d="M1180 139h32v26h-32zM1191 139v26M1202 139v26" stroke="#d5d5d5" />
            <path d="M1522 48h30v36h-30z" fill="#8a8a8a" />
            <path d="M1505 95L1536 82H1570V130H1460z" fill="#5b6468" />
            <path d="M1445 195h15v38h-15z" />
        </g>
        <path d="M678 85H742M678 95H755M678 106H772M678 117H788M1165 85H1256M1155 98H1256M1170 112H1256M1490 105H1570M1475 118H1570" stroke="#3f474c" />
        <path d="M696 137h32v34h-32zM760 137h24v34h-24zM688 196h52v34h-52z" fill="#18242d" />
        <path d="M678 73H726L806 128V134H672M800 134V180H853M680 260H855M696 137h32v34h-32zM706 137v34M717 137v34M760 137h24v34h-24zM772 137v34M688 196h52v34h-52zM700 196v34M712 196v34M724 196v34M738 196v62M803 180V255M852 180V255M1055 110V250M1096 100h72v78h-72zM1096 126h72M1065 178h15" stroke="#e8e800" strokeWidth="1.5" />
        <path d="M775 106H855M812 128h16v38h-16zM670 184L690 178H790L800 190H780V258M752 196V258M674 194h115M678 196V258M1095 106H1055M1088 130v48M1150 95L1180 73H1235V50H1248V80M1170 132H1265M1445 193L1462 180M1445 193V262H1460M670 50V80" stroke="#e01018" strokeWidth="1.5" />
        <path d="M808 198h28v56h-28zM815 198v56M822 198v56M829 198v56" stroke="#e010e0" />
        <path d="M758 200h24v56h-24zM770 200v56M758 218h24M758 236h24" stroke="#e5e5e5" strokeDasharray="3 1" />
        <path d="M1080 178H1258M1083 180V250M1092 193h68v60M1092 193v60M1170 193h78v56M1170 193v56M1210 193v56M1075 250H1258M1454 132L1505 95L1525 84M1454 132H1570M1460 135V200M1540 135v30h12v-30" stroke="#10c8cc" strokeWidth="1.5" />
        <path d="M964 254H1350M590 261H660M860 261H946M1392 260H1450" stroke="#fff" strokeWidth="1.5" />
        <path d="M1470 260V178M1466 184H1570M1476 192V250H1560V192" stroke="#fff" strokeWidth="2" />
        <path d="M1465 258H1570" stroke="#8a8a8a" strokeWidth="3" />
        <path d="M668 33V313M852 33V313M1055 33V313M1266 33V313" stroke="#fa0505" strokeWidth="7" strokeLinecap="round" />
        <path d="M662 52h10v28h-10z" stroke="#8a8a8a" />
    </g>
);

const SiteDrawing = () => (
    <svg className="block w-full h-full" fill="none" aria-label="Planos y alzados">
        <defs>
            <pattern id="hatch" width="10" height="10" patternUnits="userSpaceOnUse">
                <path d="M-2 12L12 -2M-2 2L2 -2M8 12L12 8" stroke="#93979a" strokeWidth="2" />
            </pattern>
        </defs>
        <g transform="translate(-999 -192)">
            <Grid x={1027.5} y={182.8} step={52.1} major={5} left={999} width={2000} />
            <path d="M1027.500 192V624" stroke="#17703a" />
            <path d="M999 704.500H4000" stroke="#7a2a34" />
            <path d="M1027.500 623V704.500H1108M1021.500 697.500h13v14h-13z" stroke="#f0f0f0" />
            <g fill="#cfd3d6" fontSize="27" fontWeight="100" fontFamily="Lato, sans-serif">
                <text x="1028" y="613">Y</text>
                <text x="1119" y="705">X</text>
            </g>

            <Elevations />

            <g transform="translate(1190 501.300) scale(0.33333)" opacity="0.5">
                <SiteBase />
                <Boundary />
                <Roofs />
                <GroundFloor />
            </g>
            <g transform="translate(1190 710) scale(0.33333)">
                <SiteBase />
                <Boundary />
                <Roofs />
                <UpperFloor />
            </g>

            {/* curvas de nivel */}
            <path d="M1786.500 466.500H4000M1786.500 466.500V881.500H4000" stroke="#b01fb8" />
            <path d="M1817 467L1796 520L1891 553Q1905 555 1920 551M1786 536L1879 570Q1890 573 1920 565M1786 593L1842 614Q1862 630 1870 650L1875 717L1810 842L1786 845M1786 608Q1805 612 1805 620L1806 640Q1810 655 1836 690V714L1796 818L1786 828" stroke="#59646c" />

            <path d="M1551 473.500H1652M1602 424V525M1599 471h6v6h-6z" stroke="#dfe3e6" strokeWidth="1.500" />
            <path
                transform="translate(1190 370) scale(0.33333)"
                fill="#ec2427"
                d="M405 143C365 145 358 85 400 72C480 48 560 42 640 42C800 42 950 70 1080 125C1290 215 1434 370 1434 560C1434 760 1250 960 960 1040C860 1068 770 1078 670 1078C300 1078 12 870 12 640C12 450 150 290 350 200C450 160 560 150 650 150C730 152 790 160 799 168C799 174 795 174 790 173C660 172 540 180 430 215C200 290 73 450 73 620C73 830 330 998 690 998C1060 998 1350 790 1350 540C1350 400 1240 300 1080 225C900 140 640 115 405 143Z"
            />
        </g>
    </svg>
);

/* ---------- línea de comandos ---------- */

const CommandLine = ({id, history}: {id: string; history: string[]}) => (
    <div className="h-[68px] pt-1 pb-[5px] pl-1 flex bg-[#334256]">
        <div className="w-4 shrink-0 flex flex-col items-start gap-[3px]">
            <Icon className="w-4 h-[6px]" box="0 0 16 6"><path d="M0 1h16M0 3.500h16M0 6h16" strokeDasharray="1 1" strokeWidth="1" /></Icon>
            <button aria-label="Cerrar línea de comandos"><CrossIcon className="size-4" /></button>
            <button aria-label="Personalizar línea de comandos">
                <Icon className="size-[14px]"><path d="M1 15l1-5 7-8 3 2.500-7 8zM8 12h7M8 15h7" /></Icon>
            </button>
        </div>
        <div className="flex-1 min-w-0 ml-1 flex flex-col bg-[#dcdcdc] border-2 border-t-[#858b92] border-l-[#858b92] border-b-white border-r-0 text-xs text-[#2b2b2b] font-['DejaVu_Sans_Mono',monospace] whitespace-pre overflow-hidden">
            <div className="h-[36px] pl-[2px] border-b border-[#8f8f8f]">
                {history.map((line, i) => <div key={i} className={i === 0 ? "h-[18px] leading-[14px]" : "leading-4"}>{line}</div>)}
            </div>
            <input id={id} aria-label="Línea de comandos" defaultValue="Comando:" className="flex-1 min-h-0 pl-[2px] bg-transparent outline-none" />
        </div>
    </div>
);

const CanvasFrame = ({children}: {children: ReactNode}) => (
    <div className="flex-1 min-h-0 bg-[#18242d] border-t-[3px] border-l-2 border-b-[3px] border-t-[#7d8184] border-l-[#a5a8ab] border-b-white overflow-hidden">
        {children}
    </div>
);

const ModelTabs = () => (
    <div className="flex items-center h-full pb-px text-[11px] text-[#9fabb8]">
        <button className="w-[49px] h-full text-left text-xs font-bold text-white bg-[#334256] rounded-br">Modelo</button>
        <button className="pl-[10px] pr-[7px]">Layout1</button>
        <span className="w-px h-[14px] bg-[#9fabb8]" />
        <button className="pl-[11px] pr-[7px]">Layout2</button>
        <span className="w-px h-[14px] bg-[#9fabb8]" />
        <button aria-label="Nueva presentación" className="pl-[14px]">
            <Icon className="size-[14px]"><path d="M8 0v16M0 8h16" strokeWidth="2" /></Icon>
        </button>
    </div>
);

// flecha roja que señala la pestaña activa
const Arrow = () => (
    <svg viewBox="0 0 1500 600" className="absolute left-0 top-0 w-[500px] h-[200px] pointer-events-none" fill="none" stroke="#ec2024" strokeWidth="35" strokeLinecap="round" strokeLinejoin="round" aria-hidden="true">
        <path d="M1350 250C1080 252 860 310 690 470" />
        <path d="M752 306L666 498C730 475 790 470 876 472" />
        <path d="M700 400L668 500L760 440Z" fill="#ec2024" />
    </svg>
);

const windowClass = "relative flex-1 basis-0 min-w-0 h-full flex flex-col overflow-hidden bg-[#222d3b]";

const LeftWindow = () => (
    <div className={windowClass}>
        <header className="h-[26px] flex items-center">
            <QuickAccess />
            <WorkspaceBox id="workspace-left" />
        </header>
        <div className="h-[34px] pt-[2px] flex items-center">
            <a href="#" className="w-[14px] h-5 mr-[19px] shrink-0 rounded-r bg-[#0a99ff] text-[13px] leading-5 text-white overflow-hidden"><span className="-ml-[6px]">o</span></a>
            <MenuTabs tabs={["Inserción", "Anotación", "3D", "Superficie", "Malla", "Presentación", "Vista", "Administrar", "Exportar", "Ayuda", "ARCHLine.XP", "Menú"]} />
        </div>
        <div className="h-[97px] flex gap-[6px]">
            <DrawPanel />
            <ModifyPanel />
            <AnnotationPanel />
            <LayersPanel />
        </div>
        <DocumentTabs />
        <main className="flex-1 min-h-0 flex">
            <PropertiesPanel />
            <div className="flex-1 min-w-0 flex flex-col">
                <CanvasFrame><EmptyDrawing /></CanvasFrame>
                <CommandLine id="command-left" history={["Comando:", "Comando:"]} />
            </div>
        </main>
        <footer className="h-6"><ModelTabs /></footer>
        <Arrow />
    </div>
);

const RightWindow = () => (
    <div className={windowClass}>
        <header className="h-[26px] flex items-center justify-between">
            <WorkspaceBox id="workspace-right" clipped />
            <span className="text-[11px] font-bold text-[#e4e9ee] whitespace-nowrap">GstarCAD 2026 Plus - [Instal</span>
        </header>
        <div className="h-[34px] pt-[2px] flex items-center">
            <MenuTabs tabs={["Superficie", "Malla", "Presentación", "Vista", "Administrar", "Exportar", "Ayuda", "ARCHLine.XP", "Menú Expres", "Paramétrico", "Aplicación"]} />
        </div>
        <div className="h-[97px] pb-[7px] flex">
            <RibbonPanel className="w-[130px] -ml-[47px]">
                <button className="flex-1 flex flex-col items-center justify-start pt-[6px]">
                    <Icon className="w-8 h-7" box="0 0 32 28">
                        <path d="M10 2H25l5.500 5.500V25H1.500V2H4M25 2v6h5.500M6 6v4c0 3 5 3 5 0V3c0-3-6-3-6 0" />
                        <path d="M17 18h14" stroke="#e2454f" strokeWidth="2" />
                    </Icon>
                    <span className="mt-1 leading-[14px]">Eliminar de<br />conjunto de trabajo</span>
                </button>
            </RibbonPanel>
        </div>
        <div className="h-8" />
        <main className="flex-1 min-h-0 flex">
            <PropertiesEdge />
            <div className="flex-1 min-w-0 flex flex-col">
                <CanvasFrame><SiteDrawing /></CanvasFrame>
                <CommandLine id="command-right" history={["** 15 El objeto seleccionado no está en el conjunto de trabajo **", "675 Eliminado del entorno de trabajo"]} />
            </div>
        </main>
        <footer className="h-6 flex items-center justify-end text-xs text-[#8b96a1] whitespace-nowrap">14729.1705, -53.8925, 0.0</footer>
    </div>
);

const App = () => (
    <div className="h-screen flex bg-white font-['Open_Sans','Noto_Sans',sans-serif]">
        <LeftWindow />
        <div className="w-[10px] shrink-0 bg-white" />
        <RightWindow />
    </div>
);

export default App;
